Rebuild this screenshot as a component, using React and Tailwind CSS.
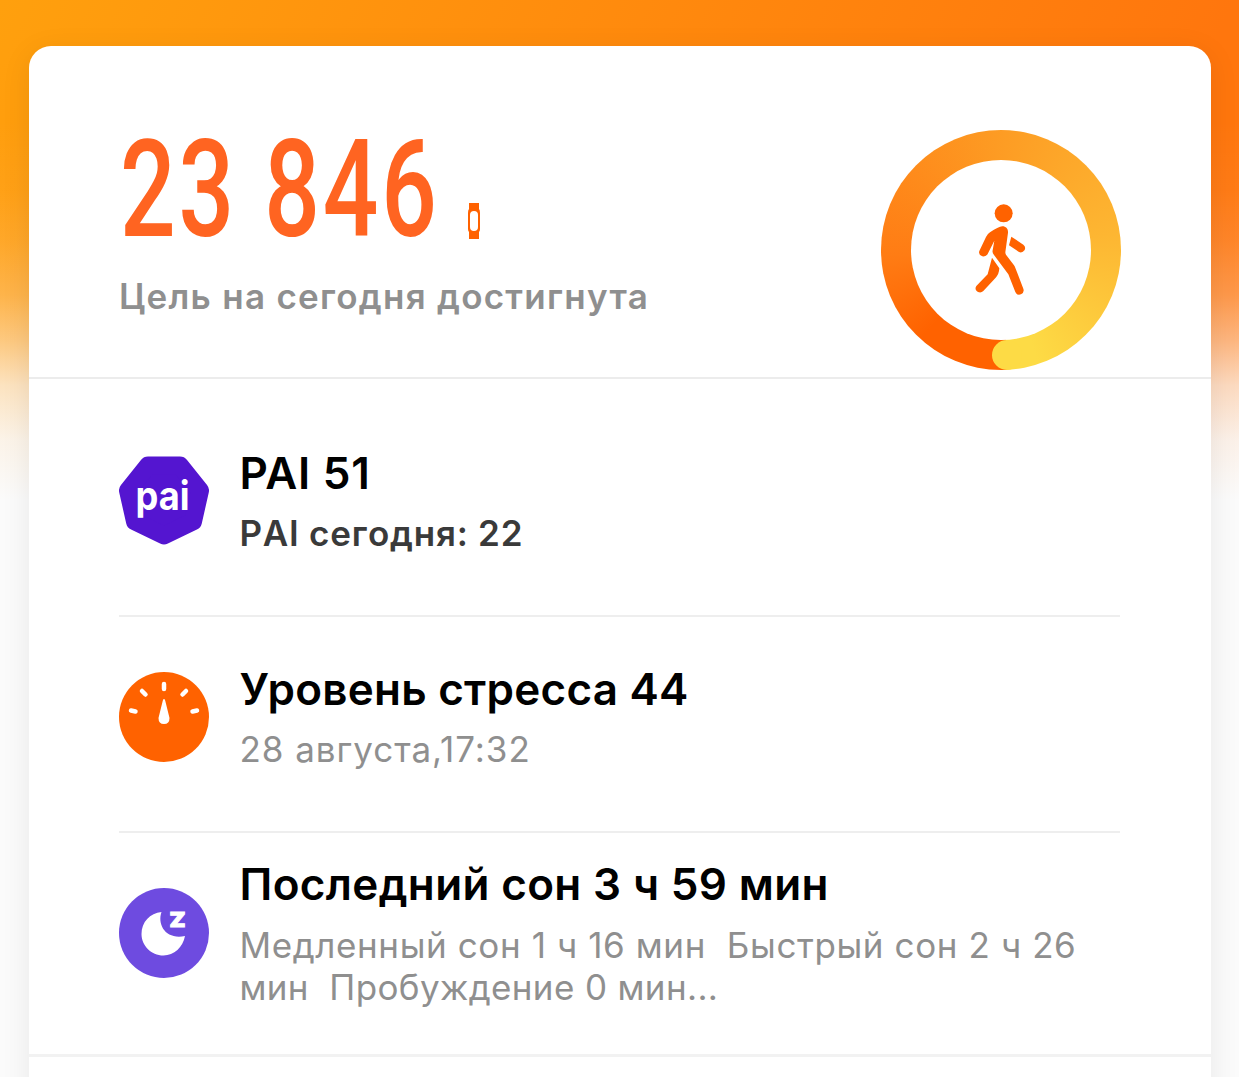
import React from 'react';

function WalkIcon() {
    return (
        <svg className="h-[94px] w-[55px]" viewBox="310 250 165 282" fill="#ff6200">
            <circle cx="402" cy="281" r="27" />
            <path d="M398 320C409 320 416 328 415 339L407 398Q407 402 409 405L433 437Q436 441 438 447L461 507Q465 518 454 524Q442 528 437 517L416 464L373 406Q367 398 369 392L374 363L354 403Q349 412 338 410Q325 405 329 394L349 352Q353 343 361 338Q386 321 398 320Z" />
            <path d="M367 414L389 446Q388 464 378 474L341 514Q334 521 325 517Q313 510 320 499L354 464Z" />
            <path d="M425 351L461 375Q469 381 465 391Q458 401 448 397L418 377Z" />
        </svg>
    );
}

function BandIcon() {
    return (
        <svg className="h-9 w-3" viewBox="0 0 12 36">
            <path fill="#ff6200" fillRule="evenodd" d="M1 0H11V6Q12 7 12 10V26Q12 28 11 29V36H1V29Q0 28 0 26V10Q0 7 1 6ZM6 8Q2 8 2 12V24Q2 28 6 28Q10 28 10 24V12Q10 8 6 8Z" />
        </svg>
    );
}

function PaiIcon() {
    return (
        <svg className="size-[90px]" viewBox="0 0 90 90">
            <path
                d="M29 10.500H61L81 35.500L74 66.500L45 80.500L16 66.500L9 35.500Z"
                fill="#5415d0"
                stroke="#5415d0"
                strokeWidth="18"
                strokeLinejoin="round"
            />
            <text x="43.5" y="54.5" textAnchor="middle" fill="#fff" textLength="54" lengthAdjust="spacingAndGlyphs" className="font-['Inter'] text-[40px] font-bold">pai</text>
        </svg>
    );
}

function StressIcon() {
    return (
        <svg className="size-[90px]" viewBox="0 0 90 90">
            <circle cx="45" cy="45" r="45" fill="#ff6200" />
            <path d="M45 12V17M23 19L26.500 22.500M67 19L63.500 22.500M12 38.500L16.500 39.500M78 38.500L73.500 39.500" stroke="#fff" strokeWidth="4.500" strokeLinecap="round" />
            <path d="M45 27Q46 27 46.300 29L50.500 46Q50.500 52 45 52Q39.500 52 39.500 46L43.700 29Q44 27 45 27Z" fill="#fff" />
        </svg>
    );
}

function SleepIcon() {
    return (
        <svg className="size-[90px]" viewBox="0 0 90 90">
            <circle cx="45" cy="45" r="45" fill="#6e4be0" />
            <path d="M42.500 24C38 37 47 52 66 48C64 59 55 67.500 44.500 67.500C32 67.500 22.500 57.500 22.500 46C22.500 34 31 25 42.500 24Z" fill="#fff" />
            <text x="50.5" y="39" fill="#fff" stroke="#fff" strokeWidth="1" textLength="16" lengthAdjust="spacingAndGlyphs" className="font-['Inter'] text-[20px] font-black">Z</text>
        </svg>
    );
}

function Row({ icon, title, children, className, iconClass, textClass }) {
    return (
        <div className={`mr-[91px] ml-[90px] flex items-start gap-[31px] ${className}`}>
            <div className={`shrink-0 ${iconClass}`}>{icon}</div>
            <div className={textClass}>
                <h2 className="text-[44px] leading-[56px] font-semibold whitespace-nowrap text-black">{title}</h2>
                {children}
            </div>
        </div>
    );
}

function App() {
    return (
        <div className="h-[1077px] overflow-hidden bg-[linear-gradient(to_bottom,#fbfbfb00_120px,#fbfbfb0a_190px,#fbfbfb1e_240px,#fbfbfb42_295px,#fbfbfb7a_340px,#fbfbfbbf_385px,#fbfbfbeb_440px,#fbfbfb_500px),linear-gradient(115deg,#ffa00d,#ff760d_71%)] px-[28.5px] pt-[46px] font-['Inter',sans-serif]">
            <div className="h-[1100px] w-[1182px] rounded-[22px] bg-white shadow-[0_6px_30px_rgba(0,0,0,0.08)]">
                <div className="flex h-[333px] justify-between border-b-2 border-[#ececec] pr-[90px] pl-[91.5px]">
                    <div className="pt-[69px]">
                        <div className="flex h-[150px] items-end">
                            <div className="w-[347.5px]">
                                <div className="origin-left scale-x-[0.72] font-['Roboto'] text-[136px] leading-[150px] font-medium tracking-[4px] whitespace-nowrap text-[#ff6421]">23 846</div>
                            </div>
                            <div className="pb-[26px]"><BandIcon /></div>
                        </div>
                        <p className="-ml-px pt-[9px] text-[35px] leading-[44px] font-semibold tracking-[1.27px] whitespace-nowrap text-[#8f8f8f]">Цель на сегодня достигнута</p>
                    </div>
                    <div className="relative mt-[84px] flex size-[240px] items-center justify-center rounded-full bg-[conic-gradient(from_177deg,#ff6200_0deg,#ff6200_45deg,#ff7c14_90deg,#fd9b23_180deg,#fdb632_265deg,#fddb45_345deg)]">
                        <div className="absolute bottom-0 left-[111.5px] size-[30px] rounded-full bg-[#fddb45]" />
                        <div className="flex size-[180px] items-center justify-center rounded-full bg-white">
                            <WalkIcon />
                        </div>
                    </div>
                </div>
                <Row icon={<PaiIcon />} title="PAI 51" className="h-[238px] border-b-2 border-[#eeeeee]" iconClass="pt-[76px]" textClass="pt-[66px] tracking-[0.8px]">
                    <p className="mt-1 text-[35px] leading-[56px] font-semibold tracking-[0.75px] text-[#3a3a3a] [font-kerning:none]">PAI сегодня: 22</p>
                </Row>
                <Row icon={<StressIcon />} title="Уровень стресса 44" className="h-[216px] border-b-2 border-[#eeeeee]" iconClass="pt-[55px]" textClass="pt-[44px] tracking-[0.24px]">
                    <p className="mt-1 text-[35px] leading-[56px] tracking-[0.95px] text-[#8f8f8f]">28 августа,17:32</p>
                </Row>
                <Row icon={<SleepIcon />} title="Последний сон 3 ч 59 мин" className="h-[200px]" iconClass="pt-[55px]" textClass="pt-[23px] tracking-[0.36px]">
                    <p className="mt-3 text-[35px] leading-[42px] whitespace-pre text-[#8f8f8f]">
                        <span className="tracking-[0.6px]">Медленный сон 1 ч 16 мин{'  '}Быстрый сон 2 ч 26</span>
                        <br />
                        <span className="tracking-[0.36px]">мин{'  '}Пробуждение 0 мин...</span>
                    </p>
                </Row>
                <div className="mt-[21px] h-[3px] bg-[#f2f2f2]" />
            </div>
        </div>
    );
}
export default App;
